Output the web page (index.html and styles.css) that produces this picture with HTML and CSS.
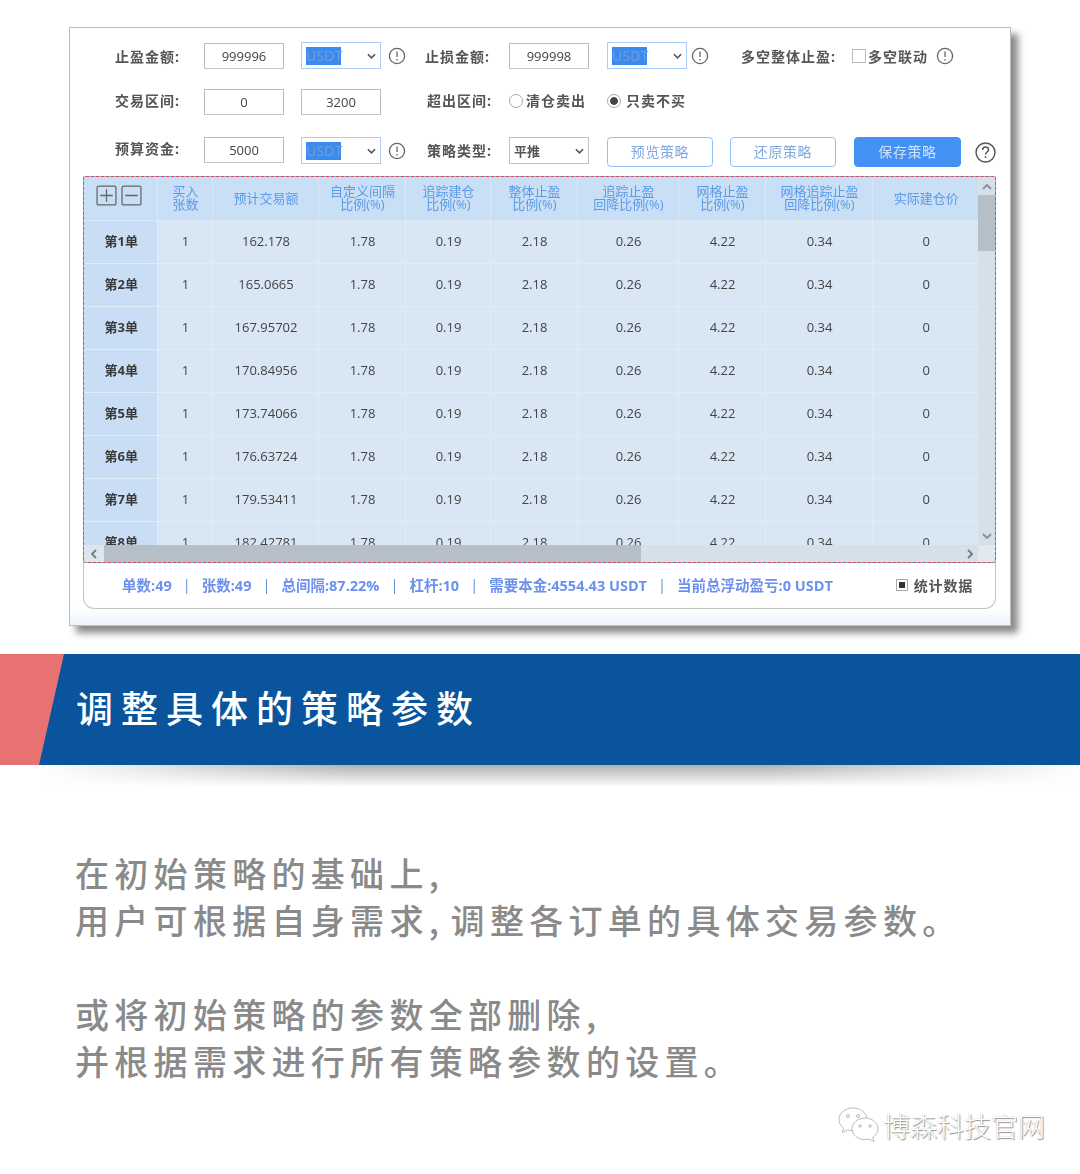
FILE: index.html
```html
<!DOCTYPE html>
<html lang="zh-CN">
<head>
<meta charset="utf-8">
<title>调整具体的策略参数</title>
<link rel="stylesheet" href="styles.css">
</head>
<body>
<section class="panel">
  <div class="row">
    <span class="lab">止盈金额:</span>
    <span class="inp">999996</span>
    <span class="sel gap17"><b>USDT</b><svg class="chev" viewBox="0 0 10 6"><path d="M1 1l4 4 4-4"/></svg></span>
    <svg class="info gap7" viewBox="0 0 18 18"><circle cx="9" cy="9" r="7.6"/><path d="M9 4.5v5.5M9 12v1.6"/></svg>
    <span class="lab lab2 gap19">止损金额:</span>
    <span class="inp">999998</span>
    <span class="sel gap18"><b>USDT</b><svg class="chev" viewBox="0 0 10 6"><path d="M1 1l4 4 4-4"/></svg></span>
    <svg class="info gap4" viewBox="0 0 18 18"><circle cx="9" cy="9" r="7.6"/><path d="M9 4.5v5.5M9 12v1.6"/></svg>
    <span class="lab lab3 gap32">多空整体止盈:</span>
    <span class="check"></span>
    <span class="opt gap2">多空联动</span>
    <svg class="info gap8" viewBox="0 0 18 18"><circle cx="9" cy="9" r="7.6"/><path d="M9 4.5v5.5M9 12v1.6"/></svg>
  </div>
  <div class="row row2">
    <span class="lab">交易区间:</span>
    <span class="inp">0</span>
    <span class="inp gap17">3200</span>
    <span class="lab lab4 gap46">超出区间:</span>
    <span class="radio"></span>
    <span class="opt gap3 w81">清仓卖出</span>
    <span class="radio on"></span>
    <span class="opt gap5">只卖不买</span>
  </div>
  <div class="row row3">
    <span class="lab">预算资金:</span>
    <span class="inp">5000</span>
    <span class="sel gap17"><b>USDT</b><svg class="chev" viewBox="0 0 10 6"><path d="M1 1l4 4 4-4"/></svg></span>
    <svg class="info gap7" viewBox="0 0 18 18"><circle cx="9" cy="9" r="7.6"/><path d="M9 4.5v5.5M9 12v1.6"/></svg>
    <span class="lab lab4 gap21 low">策略类型:</span>
    <span class="sel plain"><i>平推</i><svg class="chev" viewBox="0 0 10 6"><path d="M1 1l4 4 4-4"/></svg></span>
    <span class="btn gap18">预览策略</span>
    <span class="btn gap17">还原策略</span>
    <span class="btn solid gap18">保存策略</span>
    <svg class="help" viewBox="0 0 20 20"><circle cx="10" cy="10" r="9"/><path d="M7.2 7.6c0-1.8 1.3-2.8 2.9-2.8s2.8 1 2.8 2.5c0 2.2-2.9 2.2-2.9 4.6M10 13.6v1.6"/></svg>
  </div>

  <div class="board">
    <div class="grid">
      <div class="view">
        <table class="tbl">
          <colgroup>
            <col class="c0"><col class="c1"><col class="c2"><col class="c3"><col class="c4"><col class="c5"><col class="c6"><col class="c7"><col class="c8"><col class="c9">
          </colgroup>
          <thead>
            <tr>
              <th class="tools">
                <svg class="tool" viewBox="0 0 20 20"><rect x="1" y="1" width="18" height="18" rx="1.5"/><path d="M10 4v12M4 10h12"/></svg><svg class="tool" viewBox="0 0 20 20"><rect x="1" y="1" width="18" height="18" rx="1.5"/><path d="M4 10h12"/></svg>
              </th>
              <th>买入<br>张数</th>
              <th>预计交易额</th>
              <th>自定义间隔<br>比例(%)</th>
              <th>追踪建仓<br>比例(%)</th>
              <th>整体止盈<br>比例(%)</th>
              <th>追踪止盈<br>回降比例(%)</th>
              <th>网格止盈<br>比例(%)</th>
              <th>网格追踪止盈<br>回降比例(%)</th>
              <th>实际建仓价</th>
            </tr>
          </thead>
          <tbody>
            <tr><th>第1单</th><td>1</td><td>162.178</td><td>1.78</td><td>0.19</td><td>2.18</td><td>0.26</td><td>4.22</td><td>0.34</td><td>0</td></tr>
            <tr><th>第2单</th><td>1</td><td>165.0665</td><td>1.78</td><td>0.19</td><td>2.18</td><td>0.26</td><td>4.22</td><td>0.34</td><td>0</td></tr>
            <tr><th>第3单</th><td>1</td><td>167.95702</td><td>1.78</td><td>0.19</td><td>2.18</td><td>0.26</td><td>4.22</td><td>0.34</td><td>0</td></tr>
            <tr><th>第4单</th><td>1</td><td>170.84956</td><td>1.78</td><td>0.19</td><td>2.18</td><td>0.26</td><td>4.22</td><td>0.34</td><td>0</td></tr>
            <tr><th>第5单</th><td>1</td><td>173.74066</td><td>1.78</td><td>0.19</td><td>2.18</td><td>0.26</td><td>4.22</td><td>0.34</td><td>0</td></tr>
            <tr><th>第6单</th><td>1</td><td>176.63724</td><td>1.78</td><td>0.19</td><td>2.18</td><td>0.26</td><td>4.22</td><td>0.34</td><td>0</td></tr>
            <tr><th>第7单</th><td>1</td><td>179.53411</td><td>1.78</td><td>0.19</td><td>2.18</td><td>0.26</td><td>4.22</td><td>0.34</td><td>0</td></tr>
            <tr><th>第8单</th><td>1</td><td>182.42781</td><td>1.78</td><td>0.19</td><td>2.18</td><td>0.26</td><td>4.22</td><td>0.34</td><td>0</td></tr>
          </tbody>
        </table>
      </div>
      <div class="vbar">
        <svg class="arrow" viewBox="0 0 10 6"><path d="M1 5l4-4 4 4"/></svg>
        <span class="vthumb"></span>
        <svg class="arrow end" viewBox="0 0 10 6"><path d="M1 1l4 4 4-4"/></svg>
      </div>
      <div class="hbar">
        <span class="hbtn"><svg class="arrow-h" viewBox="0 0 6 10"><path d="M5 1L1 5l4 4"/></svg></span>
        <span class="hthumb"></span>
        <svg class="arrow-h end" viewBox="0 0 6 10"><path d="M1 1l4 4-4 4"/></svg>
      </div>
      <div class="corner"></div>
    </div>
    <div class="stats">
      <span>单数:49</span><em>|</em><span>张数:49</span><em>|</em><span>总间隔:87.22%</span><em>|</em><span>杠杆:10</span><em>|</em><span>需要本金:4554.43 USDT</span><em>|</em><span>当前总浮动盈亏:0 USDT</span>
      <span class="toggle"><i></i>统计数据</span>
    </div>
  </div>
</section>

<section class="banner">
  <h1>调整具体的策略参数</h1>
</section>
<div class="banner-shadow"></div>

<section class="copy">
  <p>在初始策略的基础上,<br>用户可根据自身需求, 调整各订单的具体交易参数。</p>
  <p>或将初始策略的参数全部删除,<br>并根据需求进行所有策略参数的设置。</p>
</section>

<footer class="mark">
  <svg class="wechat" viewBox="0 0 44 40">
    <path d="M17 3C9 3 3 8 3 14.500c0 3.500 1.800 6.500 4.600 8.600L6.400 27.500l5-2.600c1.500.5 3.100.7 4.700.7"/>
    <path d="M17 3c7 0 13 4.300 14 10"/>
    <circle cx="12" cy="11" r="1.500"/><circle cx="22" cy="11" r="1.500"/>
    <path d="M29 13c-7.200 0-13 4.800-13 10.800S21.800 34.600 29 34.600c1.500 0 2.900-.2 4.200-.6l4.800 2.600-1.200-4.200C40 30.400 42 27.300 42 23.800 42 17.800 36.200 13 29 13z"/>
    <circle cx="24" cy="21" r="1.300"/><circle cx="34" cy="21" r="1.300"/>
  </svg>
  <span>博森科技官网</span>
</footer>
</body>
</html>
```

FILE: styles.css
```css
* { box-sizing: border-box; }

html, body { margin: 0; padding: 0; background: #fff; }

body {
  width: 1080px;
  height: 1174px;
  overflow: hidden;
  font-family: "Open Sans", "Noto Sans CJK SC", sans-serif;
}

/* Screenshot panel */
.panel {
  width: 942px;
  height: 599px;
  margin: 27px 0 0 69px;
  padding: 14px 12px 0 45px;
  background: linear-gradient(#fff 97%, #eef4fc);
  border: 1px solid #bdbdbd;
  box-shadow: 7px 7px 7px rgba(60, 60, 60, .6);
  color: #444;
  filter: blur(.45px);
}

.row { display: flex; align-items: center; height: 27px; }
.row2 { margin-top: 19px; }
.row2 .lab, .row2 .opt { margin-top: -3px; }
.row2 .radio { margin-top: -1px; }
.row3 { margin-top: 22px; height: 30px; align-items: flex-start; }
.row3 .lab { margin-top: 1px; }
.row3 .lab.low { margin-top: 3px; }
.row3 .info { margin-top: 5px; }

.lab {
  width: 89px;
  font-size: 14px;
  font-weight: 700;
  letter-spacing: 1px;
  color: #555;
  white-space: nowrap;
}
.lab2 { width: 84px; }
.lab3 { width: 111px; }
.lab4 { width: 82px; }

.inp {
  width: 80px;
  height: 26px;
  border: 1px solid #bcbcbc;
  border-bottom-color: #c6c6c6;
  font-size: 13px;
  line-height: 24px;
  text-align: center;
  color: #444;
  background: #fff;
}

.sel {
  display: flex;
  align-items: center;
  justify-content: space-between;
  width: 80px;
  height: 27px;
  padding: 0 4px 0 4px;
  border: 1px solid #a9cdf4;
  font-size: 14px;
}
.sel b {
  width: 35px;
  font-weight: 400;
  line-height: 18px;
  background: #3b8bee;
  color: #6f9ee0;
  letter-spacing: .2px;
}
.sel i { font-style: normal; font-size: 13px; font-weight: 700; color: #555; }
.sel.plain { border-color: #c0c0c0; padding-left: 4px; }

.chev { width: 9px; height: 6px; fill: none; stroke: #555; stroke-width: 1.8; }

.info { width: 18px; height: 18px; fill: none; stroke: #666; stroke-width: 1.3; flex: none; }
.help { width: 21px; height: 21px; margin: 5px 0 0 14px; fill: none; stroke: #555; stroke-width: 1.4; flex: none; }

.check {
  width: 14px; height: 14px; flex: none;
  border: 1px solid #bbb;
  background: #fff;
}
.opt { font-size: 14px; font-weight: 700; letter-spacing: 1px; color: #555; white-space: nowrap; }
.w81 { width: 81px; }

.radio {
  width: 14px; height: 14px; flex: none;
  border: 1px solid #aaa;
  border-radius: 50%;
  background: #fff;
}
.radio.on {
  background: radial-gradient(circle, #444 0 3.500px, #fff 4.200px);
}

.btn {
  width: 106px;
  height: 30px;
  border: 1px solid #8fc0f7;
  border-radius: 4px;
  font-size: 14px;
  line-height: 28px;
  text-align: center;
  letter-spacing: .6px;
  color: #7fa9e2;
  background: #fff;
}
.btn.solid { width: 107px; background: #4391f3; border-color: #4391f3; color: #cfe2fb; }

.gap2 { margin-left: 2px; }
.gap3 { margin-left: 3px; }
.gap4 { margin-left: 4px; }
.gap5 { margin-left: 5px; }
.gap7 { margin-left: 7px; }
.gap8 { margin-left: 8px; }
.gap17 { margin-left: 17px; }
.gap18 { margin-left: 18px; }
.gap19 { margin-left: 19px; }
.gap21 { margin-left: 21px; }
.gap32 { margin-left: 32px; }
.gap46 { margin-left: 46px; }

/* Data board */
.board {
  width: 913px;
  height: 433px;
  margin: 9px 0 0 -32px;
  border: 1px solid #c4c4c4;
  border-top: 0;
  border-radius: 0 0 11px 11px;
  display: flex;
  flex-direction: column;
}

.grid {
  display: grid;
  grid-template-columns: 1fr 17px;
  grid-template-rows: 1fr 17px;
  height: 387px;
  margin: 0 -1px;
  border: 1px dashed #e0474c;
  border-radius: 3px;
  background: #86b6ea;
  background-clip: border-box;
  overflow: hidden;
}

.view { overflow: hidden; background: #d9e6f3; }

.tbl {
  width: 894px;
  table-layout: fixed;
  border-collapse: collapse;
}
.c0 { width: 73px; }
.c1 { width: 55px; }
.c2 { width: 106px; }
.c3 { width: 87px; }
.c4 { width: 85px; }
.c5 { width: 87px; }
.c6 { width: 101px; }
.c7 { width: 87px; }
.c8 { width: 107px; }
.c9 { width: 106px; }

.tbl thead th {
  height: 43px;
  padding: 0 0 0 2px;
  background: #c9dff5;
  border-right: 1px solid #dbe8f6;
  border-bottom: 1px solid #dbe8f6;
  font-size: 13px;
  font-weight: 400;
  line-height: 13px;
  color: #5b9be8;
}
.tbl thead th:last-child { border-right: 0; }

.tools { font-size: 0; text-align: center; }
.tbl thead .tools { padding: 0 7px 6px 0; }
.tool { width: 21px; height: 21px; margin-left: 4px; fill: none; stroke: #666; stroke-width: 1.2; vertical-align: middle; }

.tbl tbody th,
.tbl tbody td {
  height: 43px;
  padding: 0 0 2px 2px;
  border-right: 1px solid #e2ecf6;
  border-bottom: 1px solid #e2ecf6;
  text-align: center;
  font-size: 13px;
  color: #444;
}
.tbl tbody td:last-child { border-right: 0; }
.tbl tbody th { background: #c9ddf4; font-weight: 700; color: #3a3a3a; }

.vbar {
  display: flex;
  flex-direction: column;
  align-items: center;
  background: #d6e0e9;
}
.arrow { width: 10px; height: 6px; margin: 7px 0 5px; fill: none; stroke: #8b949c; stroke-width: 2; flex: none; }
.arrow.end { margin: auto 0 6px; }
.vthumb { width: 100%; height: 56px; background: #b6bfc8; flex: none; }

.hbar {
  display: flex;
  align-items: center;
  background: #d6e0e9;
}
.hbtn { width: 20px; height: 100%; display: flex; align-items: center; justify-content: center; background: #dde6ee; flex: none; }
.hthumb { width: 537px; height: 100%; background: #b6bfc8; flex: none; }
.arrow-h { width: 6px; height: 10px; fill: none; stroke: #777f87; stroke-width: 2; flex: none; }
.arrow-h.end { margin-left: auto; margin-right: 5px; }
.corner { background: #e2e9f0; }

.stats {
  flex: 1;
  display: flex;
  align-items: center;
  padding: 0 22px 2px 38px;
  font-size: 14.500px;
  font-weight: 700;
  color: #6c90ee;
  white-space: nowrap;
}
.stats em { width: 30px; font-style: normal; font-weight: 400; text-align: center; color: #5a8fe0; }
.toggle { display: flex; align-items: center; margin-left: auto; color: #555; font-size: 14px; font-weight: 700; letter-spacing: .8px; }
.toggle i {
  width: 12px; height: 12px; margin-right: 6px;
  border: 1px solid #aaa;
  background: linear-gradient(#333, #333) center / 6px 6px no-repeat;
}

/* Banner */
.banner {
  position: relative;
  height: 111px;
  margin-top: 28px;
  background: #09549c;
}
.banner::before {
  content: "";
  position: absolute;
  inset: 0 auto 0 0;
  width: 64px;
  background: #e87272;
  clip-path: polygon(0 0, 100% 0, 61% 100%, 0 100%);
}
.banner h1 {
  margin: 0;
  padding-left: 76px;
  font-family: "Noto Sans CJK SC", sans-serif;
  font-size: 37px;
  font-weight: 500;
  line-height: 107px;
  letter-spacing: 8px;
  color: #fff;
}
.banner-shadow {
  height: 22px;
  margin-left: 40px;
  background: linear-gradient(rgba(150, 150, 150, .75), rgba(255, 255, 255, 0));
  -webkit-mask-image: linear-gradient(90deg, transparent, #000 30%, #000 70%, transparent);
  mask-image: linear-gradient(90deg, transparent, #000 30%, #000 70%, transparent);
}

/* Copy */
.copy {
  margin-top: 62px;
  padding-left: 75px;
  font-family: "Noto Sans CJK SC", sans-serif;
  font-size: 34px;
  font-weight: 500;
  line-height: 47px;
  letter-spacing: 5.300px;
  word-spacing: -6.500px;
  color: #8a8a8a;
  white-space: nowrap;
}
.copy p { margin: 0 0 47px; }

/* Watermark */
.mark {
  display: flex;
  align-items: center;
  margin: -26px 0 0 836px;
  height: 40px;
  font-family: "Noto Sans CJK SC", sans-serif;
  font-size: 27px;
  font-weight: 300;
  color: #fff;
  text-shadow: 1px 1px 1px #8f8f8f, -.5px -.5px 0 #d0d0d0;
  white-space: nowrap;
}
.wechat { width: 44px; height: 40px; margin-right: 3px; fill: #fff; stroke: #bbb; stroke-width: 1; flex: none; }
```
